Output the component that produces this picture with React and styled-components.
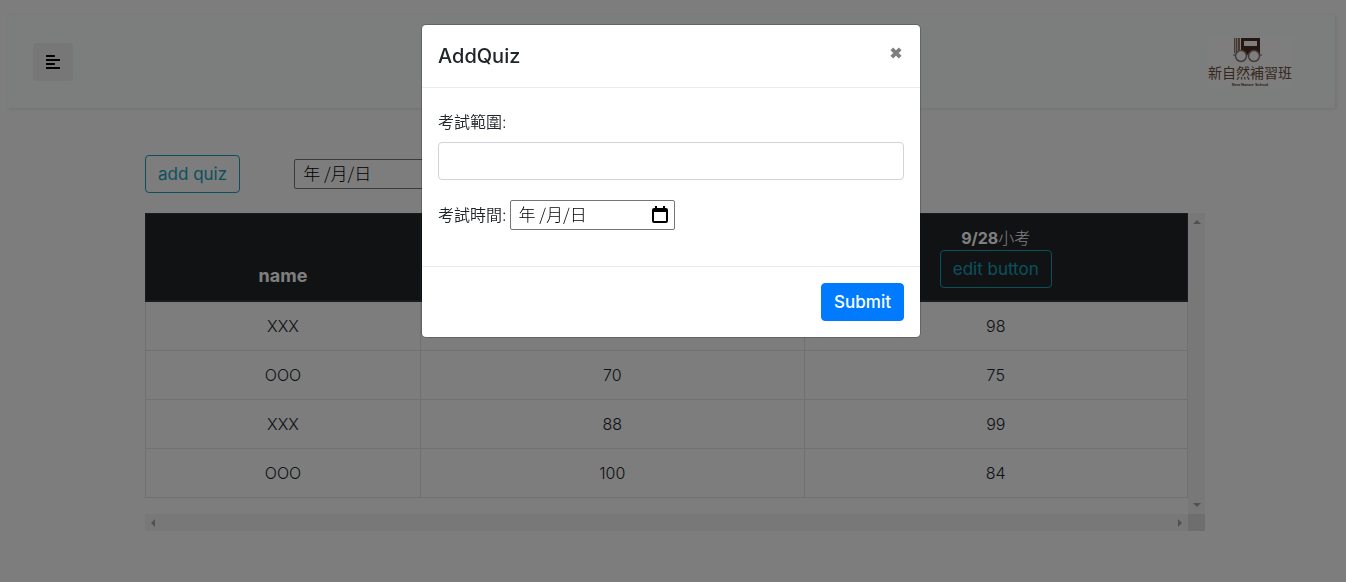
import React from "react";
import styled, { createGlobalStyle } from "styled-components";
import { FaAlignLeft } from "react-icons/fa";

const sans = `Inter, "Noto Sans CJK TC", sans-serif`;

const GlobalStyle = createGlobalStyle`
  *, *::before, *::after { box-sizing: border-box; }
  body {
    margin: 0;
    background: #fafafa;
    color: #212529;
    font: 300 16px/24px ${sans};
  }
  button, input { font: inherit; }
`;

const Page = styled.div`
  min-height: 100vh;
  padding: 15px 11px 48px 8px;
`;

const Navbar = styled.nav`
  display: flex;
  align-items: center;
  justify-content: space-between;
  padding: 22px 42px 21px 25px;
  background: #f7fdfa;
  box-shadow: 1px 1px 3px rgba(0, 0, 0, 0.1);
`;

const ToggleButton = styled.button`
  display: flex;
  align-items: center;
  justify-content: center;
  width: 40px;
  height: 38px;
  padding: 0;
  border: 0;
  border-radius: 4px;
  background: #efefef;
  color: #000;
`;

const LogoLink = styled.a`
  display: block;
  height: 50px;
  background: #fffdfc;
`;

const Content = styled.main`
  width: 80%;
  max-width: 1060px;
  margin: 47px auto 0 137px;
`;

const Toolbar = styled.div`
  display: flex;
  align-items: center;
  gap: 54px;
  margin-bottom: 20px;
`;

const Button = styled.button`
  height: 38px;
  padding: 0 12px;
  border: 1px solid ${(p) => (p.$solid ? "#007bff" : "#17a2b8")};
  border-radius: 4px;
  background: ${(p) => (p.$solid ? "#007bff" : "transparent")};
  color: ${(p) => (p.$solid ? "#fff" : "#17a2b8")};
  font-size: 17px;
  font-weight: ${(p) => (p.$solid ? 500 : 400)};
  vertical-align: bottom;
`;

const DateBox = styled.span`
  display: inline-flex;
  align-items: center;
  width: 165px;
  height: 30px;
  padding: 0 6px 0 8px;
  border: 1px solid #767676;
  border-radius: 2px;
  color: #000;
`;

const DateText = styled.input`
  flex: 1;
  min-width: 0;
  height: 28px;
  padding: 0 0 4px;
  border: 0;
  outline: 0;
  background: none;
  color: inherit;
  font-family: "Noto Sans CJK TC", sans-serif;
  font-size: 17px;
`;

const ScrollArea = styled.div`
  display: grid;
  grid-template-columns: 1fr 17px;
  grid-template-rows: auto 17px;
`;

const TableArea = styled.div`
  padding-bottom: 16px;
`;

const ScoreTable = styled.table`
  width: 100%;
  table-layout: fixed;
  border-collapse: collapse;
  text-align: center;
`;

const HeadCell = styled.th`
  width: ${(p) => p.$width || "auto"};
  padding: 12px;
  border: 1px solid #32383e;
  border-bottom-width: 2px;
  background: #212529;
  color: #fff;
  font-size: 18px;
  font-weight: 700;
  vertical-align: bottom;
`;

const QuizName = styled.div`
  font-size: 16px;
  span { font-weight: 300; }
`;

const Cell = styled.td`
  height: 49px;
  padding: 12px;
  border: 1px solid #dee2e6;
`;

const Track = styled.div`
  display: flex;
  flex-direction: ${(p) => (p.$vertical ? "column" : "row")};
  align-items: center;
  justify-content: space-between;
  padding: ${(p) => (p.$vertical ? "7px 0" : "0 6px")};
  background: #f1f1f1;
`;

const Corner = styled.div`
  background: #dcdcdc;
`;

const Backdrop = styled.div`
  position: fixed;
  inset: 0;
  padding: 24px 20px 0 16px;
  background: rgba(0, 0, 0, 0.5);
`;

const Dialog = styled.section`
  max-width: 500px;
  margin: 0 auto;
  border: 1px solid rgba(0, 0, 0, 0.2);
  border-radius: 5px;
  background: #fff;
  background-clip: padding-box;
`;

const DialogHeader = styled.header`
  display: flex;
  align-items: flex-start;
  justify-content: space-between;
  padding: 16px;
  border-bottom: 1px solid #e9ecef;
`;

const DialogTitle = styled.h5`
  margin: 0;
  font-size: 20px;
  font-weight: 500;
  line-height: 30px;
`;

const CloseButton = styled.button`
  display: flex;
  padding: 5px 1px;
  border: 0;
  background: none;
  color: #000;
  opacity: 0.5;
`;

const DialogBody = styled.div`
  padding: 22px 16px 36px;
`;

const FieldLabel = styled.label`
  display: block;
  font-weight: 350;
`;

const TextInput = styled.input`
  display: block;
  width: 100%;
  height: 38px;
  margin: 8px 0 20px;
  padding: 6px 12px;
  border: 1px solid #ced4da;
  border-radius: 4px;
`;

const FieldRow = styled.div`
  display: flex;
  align-items: center;
  gap: 3px;
`;

const DialogFooter = styled.footer`
  display: flex;
  justify-content: flex-end;
  padding: 16px;
  border-top: 1px solid #e9ecef;
`;

function CalendarIcon() {
  return (
    <svg width="16" height="18" viewBox="0 0 16 18" aria-hidden="true">
      <path d="M3 0h2v2h6V0h2v2h1q2 0 2 2v11q0 2-2 2H2q-2 0-2-2V4q0-2 2-2h1zM2 6v9h12V6z" fill="#000" fillRule="evenodd" />
    </svg>
  );
}

function CloseIcon() {
  return (
    <svg width="14" height="14" viewBox="0 0 14 14" aria-hidden="true">
      <path d="M2.800 2.800l8.400 8.400M11.200 2.800l-8.400 8.400" stroke="currentColor" strokeWidth="3.800" />
    </svg>
  );
}

function DateField({ id, label }) {
  return (
    <DateBox>
      <DateText id={id} aria-label={label} defaultValue="年 /月/日" />
      <CalendarIcon />
    </DateBox>
  );
}

function Logo() {
  return (
    <svg width="86" height="50" viewBox="0 0 86 50" role="img" aria-label="新自然補習班">
      <path d="M27 1h6v15h-6z" fill="#8a7268" />
      <path d="M34 1h19v17H34zM37 4v5h13V4z" fill="#4f2c1e" fillRule="evenodd" />
      <path d="M28.500 1v15M30.500 1v15" stroke="#d0c4be" />
      <g fill="#fffdfc" stroke="#8a766c" strokeWidth="1.500">
        <circle cx="34" cy="19" r="5.500" />
        <circle cx="47" cy="19" r="5.500" />
      </g>
      <path d="M26 18h2M39 18q1.500-1 3 0M53 18h2" stroke="#77655d" fill="none" />
      <text x="1" y="41" fontSize="14" fontWeight="400" fill="#6d4f43">新自然補習班</text>
      <text x="43" y="49" fontSize="4" fontFamily="Liberation Sans, sans-serif" fontWeight="700" textAnchor="middle" fill="#5c3c30">New Nature School</text>
    </svg>
  );
}

const arrows = {
  up: "M4 0l4 4H0z",
  down: "M0 0h8L4 4z",
  left: "M4 0v8L0 4z",
  right: "M0 0l4 4-4 4z",
};

function Arrow({ to }) {
  const upright = to === "up" || to === "down";
  return (
    <svg width={upright ? 8 : 4} height={upright ? 4 : 8} aria-hidden="true">
      <path d={arrows[to]} fill="#a3a3a3" />
    </svg>
  );
}

const rows = [
  ["XXX", "", "98"],
  ["OOO", "70", "75"],
  ["XXX", "88", "99"],
  ["OOO", "100", "84"],
];

export default function App() {
  return (
    <>
      <GlobalStyle />
      <Page>
        <Navbar>
          <ToggleButton aria-label="menu"><FaAlignLeft size={16} /></ToggleButton>
          <LogoLink href="#"><Logo /></LogoLink>
        </Navbar>
        <Content>
          <Toolbar>
            <Button>add quiz</Button>
            <DateField label="date" />
          </Toolbar>
          <ScrollArea>
            <TableArea>
              <ScoreTable>
                <thead>
                  <tr>
                    <HeadCell $width="275px">name</HeadCell>
                    <HeadCell />
                    <HeadCell>
                      <QuizName>9/28<span>小考</span></QuizName>
                      <Button>edit button</Button>
                    </HeadCell>
                  </tr>
                </thead>
                <tbody>
                  {rows.map((row, i) => (
                    <tr key={i}>
                      {row.map((value, j) => <Cell key={j}>{value}</Cell>)}
                    </tr>
                  ))}
                </tbody>
              </ScoreTable>
            </TableArea>
            <Track $vertical><Arrow to="up" /><Arrow to="down" /></Track>
            <Track><Arrow to="left" /><Arrow to="right" /></Track>
            <Corner />
          </ScrollArea>
        </Content>
      </Page>
      <Backdrop>
        <Dialog role="dialog" aria-labelledby="dialog-title">
          <DialogHeader>
            <DialogTitle id="dialog-title">AddQuiz</DialogTitle>
            <CloseButton aria-label="close"><CloseIcon /></CloseButton>
          </DialogHeader>
          <DialogBody>
            <FieldLabel htmlFor="quiz-range">考試範圍:</FieldLabel>
            <TextInput id="quiz-range" />
            <FieldRow>
              <FieldLabel htmlFor="quiz-date">考試時間:</FieldLabel>
              <DateField id="quiz-date" />
            </FieldRow>
          </DialogBody>
          <DialogFooter>
            <Button $solid>Submit</Button>
          </DialogFooter>
        </Dialog>
      </Backdrop>
    </>
  );
}
